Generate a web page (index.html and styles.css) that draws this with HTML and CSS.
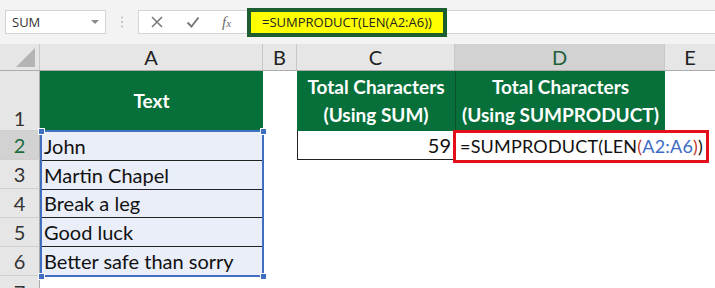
FILE: index.html
```html
<!DOCTYPE html>
<html lang="en">
<head>
    <meta charset="UTF-8">
    <meta name="viewport" content="width=device-width, initial-scale=1.0">
    <title>SUMPRODUCT LEN</title>
    <link rel="stylesheet" href="styles.css">
</head>
<body>
    <div class="topbar">
        <div class="namebox">
            <span>SUM</span>
            <span class="caret"></span>
        </div>
        <div class="grip">
            <svg width="4" height="12" viewBox="0 0 4 12"><circle cx="2" cy="1.5" r="1" fill="#b9b9b9"/><circle cx="2" cy="6" r="1" fill="#b9b9b9"/><circle cx="2" cy="10.5" r="1" fill="#b9b9b9"/></svg>
        </div>
        <div class="formula">
            <div class="fbtns">
                <svg width="14" height="14" viewBox="0 0 14 14"><path d="M2 2 L12 12 M12 2 L2 12" stroke="#7a7a7a" stroke-width="1.6" fill="none"/></svg>
                <svg width="14" height="14" viewBox="0 0 14 14"><path d="M1.5 7.5 L5.5 11.5 L12.5 2.5" stroke="#7a7a7a" stroke-width="2" fill="none"/></svg>
                <span class="fx">f<small>x</small></span>
            </div>
            <div class="fhighlight">=SUMPRODUCT(LEN(A2:A6))</div>
        </div>
    </div>

    <div class="sheet">
        <!-- selected range A2:A6 -->
        <div class="selection">
            <div class="text line">John</div>
            <div class="text line">Martin Chapel</div>
            <div class="text line">Break a leg</div>
            <div class="text line">Good luck</div>
            <div class="text">Better safe than sorry</div>
            <span class="handle tl"></span>
            <span class="handle tr"></span>
            <span class="handle bl"></span>
            <span class="handle br"></span>
        </div>

        <!-- column headers -->
        <div class="corner"><span class="tri"></span></div>
        <div class="colhead">A</div>
        <div class="colhead">B</div>
        <div class="colhead">C</div>
        <div class="colhead active">D</div>
        <div class="colhead last">E</div>

        <!-- row 1 -->
        <div class="rowhead tall">1</div>
        <div class="cell head">Text</div>
        <div class="cell"></div>
        <div class="cell head">Total Characters<br>(Using SUM)</div>
        <div class="cell head split">Total Characters<br>(Using SUMPRODUCT)</div>
        <div class="cell"></div>

        <!-- row 2 -->
        <div class="rowhead active">2</div>
        <div class="cell"></div>
        <div class="cell num">59</div>
        <div class="cell over"><span class="redbox">=SUMPRODUCT(LEN<span class="paren">(</span><span class="ref">A2:A6</span><span class="paren">)</span>)</span></div>
        <div class="cell"></div>

        <!-- rows 3-6 -->
        <div class="rowhead">3</div>
        <div class="cell"></div><div class="cell"></div><div class="cell"></div><div class="cell"></div>

        <div class="rowhead">4</div>
        <div class="cell"></div><div class="cell"></div><div class="cell"></div><div class="cell"></div>

        <div class="rowhead">5</div>
        <div class="cell"></div><div class="cell"></div><div class="cell"></div><div class="cell"></div>

        <div class="rowhead">6</div>
        <div class="cell"></div><div class="cell"></div><div class="cell"></div><div class="cell"></div>

        <!-- row 7, cut by the window -->
        <div class="rowhead cut">7</div>
        <div class="cell"></div><div class="cell"></div><div class="cell"></div><div class="cell"></div><div class="cell"></div>
    </div>
</body>
</html>
```

FILE: styles.css
```css
body {
    margin: 0;
    width: 715px;
    height: 288px;
    overflow: hidden;
    background: #fff;
    font-family: Lato, "Liberation Sans", sans-serif;
}
.topbar {
    height: 44px;
    background: #f3f3f3;
    display: flex;
    align-items: center;
    padding-left: 5px;
    box-sizing: border-box;
}
.namebox {
    width: 101px;
    height: 24px;
    box-sizing: border-box;
    background: #fff;
    border: 1px solid #d4d4d4;
    display: flex;
    align-items: center;
    justify-content: space-between;
    padding: 0 6px 0 6px;
    font-family: "Open Sans", sans-serif;
    font-size: 13px;
    color: #333;
}
.caret {
    width: 0;
    height: 0;
    border-left: 4px solid transparent;
    border-right: 4px solid transparent;
    border-top: 4px solid #8a8a8a;
}
.grip {
    width: 32px;
    display: flex;
    justify-content: center;
}
.formula {
    flex: 1;
    height: 24px;
    background: #fff;
    border: 1px solid #d4d4d4;
    border-right: none;
    box-sizing: border-box;
    display: flex;
    align-items: center;
}
.fbtns {
    width: 108px;
    display: flex;
    align-items: center;
    gap: 22px;
    padding-left: 11px;
    box-sizing: border-box;
}
.fx {
    font-family: "Liberation Serif", serif;
    font-style: italic;
    font-size: 15px;
    color: #6a6a6a;
}
.fx small {
    font-size: 11px;
}
.fhighlight {
    height: 29px;
    margin: -3px 0;
    width: 200px;
    box-sizing: border-box;
    border: 4px solid #1c5e30;
    background: #ffff00;
    font-family: "Open Sans", sans-serif;
    font-size: 13px;
    color: #222;
    display: flex;
    align-items: center;
    padding-left: 11px;
}

.sheet {
    display: grid;
    grid-template-columns: 40px 223px 34px 158px 210px 50px;
    grid-template-rows: 27px 60px 29px 29px 29px 29px 29px 12px;
}
.corner {
    background: #e6e6e6;
    border-right: 1px solid #c8c8c8;
    border-bottom: 1px solid #ababab;
    position: relative;
}
.tri {
    position: absolute;
    right: 4px;
    bottom: 3px;
    width: 0;
    height: 0;
    border-left: 19px solid transparent;
    border-bottom: 19px solid #b4b4b4;
}
.colhead {
    background: #e6e6e6;
    border-right: 1px solid #c8c8c8;
    border-bottom: 1px solid #ababab;
    display: flex;
    align-items: center;
    justify-content: center;
    font-size: 20px;
    color: #222;
}
.colhead.active {
    background: #d2d2d2;
    color: #1e5e3a;
}
.colhead.last {
    border-right: none;
}
.rowhead {
    background: #e6e6e6;
    border-right: 1px solid #ababab;
    border-bottom: 1px solid #cfcfcf;
    display: flex;
    align-items: center;
    justify-content: center;
    font-size: 20px;
    color: #333;
}
.rowhead.tall {
    align-items: flex-end;
    padding-bottom: 0;
}
.rowhead.active {
    background: #d2d2d2;
    color: #1e6a3c;
}
.rowhead.cut {
    align-items: flex-start;
    padding-top: 4px;
    overflow: hidden;
    border-bottom: none;
}
.cell {
    font-size: 20px;
    color: #111;
    white-space: nowrap;
}
.cell.head {
    background: #07703a;
    color: #fff;
    font-weight: bold;
    font-size: 19px;
    line-height: 28px;
    display: flex;
    align-items: center;
    justify-content: center;
    text-align: center;
}
.cell.split {
    border-left: 1px solid #0a4f2a;
}
.cell.num {
    border-left: 1px solid #222;
    border-bottom: 1px solid #222;
    text-align: right;
    padding-right: 4px;
    line-height: 29px;
}
.cell.over {
    position: relative;
    z-index: 2;
}
.redbox {
    display: inline-block;
    margin: -1px 0 0 -2px;
    height: 33px;
    width: 256px;
    box-sizing: border-box;
    border: 3px solid #e3101a;
    background: #fff;
    padding-left: 4px;
    font-size: 18px;
    letter-spacing: 0.2px;
    line-height: 27px;
}
.paren {
    color: #c0392b;
}
.ref {
    color: #3d6bc4;
}
.selection {
    grid-column: 2;
    grid-row: 3 / 8;
    margin: -1px -1px -1px 0;
    border: 2px solid #3f6fc0;
    background: #e9eef8;
    display: flex;
    flex-direction: column;
    position: relative;
    z-index: 1;
}
.text {
    flex: 1;
    font-size: 20px;
    color: #111;
    white-space: nowrap;
    padding-left: 2px;
    display: flex;
    align-items: center;
}
.text.line {
    border-bottom: 1px solid #222;
}
.handle {
    position: absolute;
    width: 5px;
    height: 5px;
    background: #3f6fc0;
    border: 1px solid #fff;
}
.handle.tl { left: -4px; top: -4px; }
.handle.tr { right: -5px; top: -4px; }
.handle.bl { left: -4px; bottom: -5px; }
.handle.br { right: -5px; bottom: -5px; }
```
